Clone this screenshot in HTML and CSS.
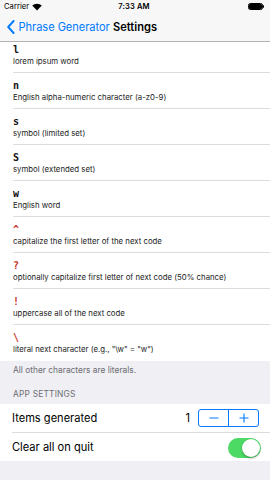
FILE: index.html
```html
<!DOCTYPE html>
<html>
<head>
<meta charset="utf-8">
<link rel="stylesheet" href="styles.css">
</head>
<body>
<div class="screen">
  <header class="topbar">
    <div class="status">
      <div class="carrier">Carrier
        <svg class="wifi" width="10" height="8" viewBox="0 0 10 8"><path d="M5 7.6 L0.2 2.6 A7 7 0 0 1 9.8 2.6 Z" fill="#000"/></svg>
      </div>
      <div class="time">7:33 AM</div>
      <div class="battery"><span class="cell"></span><span class="nub"></span></div>
    </div>
    <nav class="nav">
      <div class="back">
        <svg class="chev" width="8" height="14" viewBox="0 0 8 14"><path d="M6.6 1 L1.2 7 L6.6 13" fill="none" stroke="#007aff" stroke-width="1.9" stroke-linecap="round" stroke-linejoin="round"/></svg>
        <span>Phrase Generator</span>
      </div>
      <div class="title">Settings</div>
      <div></div>
    </nav>
  </header>
  <main class="content">
    <ul class="codes">
      <li class="code"><div class="key">l</div><div class="desc">lorem ipsum word</div></li>
      <li class="code"><div class="key">n</div><div class="desc">English alpha-numeric character (a-z0-9)</div></li>
      <li class="code"><div class="key">s</div><div class="desc">symbol (limited set)</div></li>
      <li class="code"><div class="key">S</div><div class="desc">symbol (extended set)</div></li>
      <li class="code"><div class="key">w</div><div class="desc">English word</div></li>
      <li class="code"><div class="key red">^</div><div class="desc">capitalize the first letter of the next code</div></li>
      <li class="code"><div class="key red">?</div><div class="desc">optionally capitalize first letter of next code (50% chance)</div></li>
      <li class="code"><div class="key red">!</div><div class="desc">uppercase all of the next code</div></li>
      <li class="code"><div class="key red">\</div><div class="desc">literal next character (e.g., "\w" = "w")</div></li>
    </ul>
    <div class="footer">All other characters are literals.</div>
    <div class="section-header">APP SETTINGS</div>
    <ul class="settings">
      <li class="setting">
        <span class="label">Items generated</span>
        <div class="stepper-wrap">
          <span class="value">1</span>
          <div class="stepper">
            <span class="btn"><svg width="10" height="10" viewBox="0 0 10 10"><path d="M0.5 5 H9.5" stroke="#007aff" stroke-width="1"/></svg></span>
            <span class="btn"><svg width="10" height="10" viewBox="0 0 10 10"><path d="M0.5 5 H9.5 M5 0.5 V9.5" stroke="#007aff" stroke-width="1.1"/></svg></span>
          </div>
        </div>
      </li>
      <li class="setting">
        <span class="label">Clear all on quit</span>
        <div class="switch"><span class="knob"></span></div>
      </li>
    </ul>
  </main>
</div>
</body>
</html>
```
FILE: styles.css
```css
* { box-sizing: border-box; }
html, body { margin: 0; padding: 0; }
body {
  width: 270px;
  height: 480px;
  overflow: hidden;
  background: #efeff4;
  font-family: Inter, "Noto Sans", sans-serif;
  color: #000;
}
.screen { position: relative; width: 270px; height: 480px; overflow: hidden; }

.topbar {
  position: absolute;
  top: 0; left: 0; right: 0;
  height: 41.5px;
  background: rgba(247,247,247,0.97);
  border-bottom: 0.6px solid #b2b2b2;
  z-index: 2;
}
.status {
  height: 13px;
  display: grid;
  grid-template-columns: 1fr auto 1fr;
  align-items: center;
  padding: 0 6px 0 4px;
  font-size: 7.6px;
}
.carrier { display: flex; align-items: center; gap: 3px; letter-spacing: 0.05px; }
.wifi { margin-top: 0px; }
.time { font-weight: 600; letter-spacing: 0.1px; }
.battery { justify-self: end; display: flex; align-items: center; }
.cell { width: 12.5px; height: 5.5px; background: #000; border-radius: 1.3px; outline: 0.6px solid #000; outline-offset: 0.6px; }
.nub { width: 1px; height: 2.4px; background: #000; margin-left: 1.3px; border-radius: 0 1px 1px 0; }

.nav {
  height: 28.5px;
  display: grid;
  grid-template-columns: 1fr auto 1fr;
  align-items: center;
  font-size: 11.1px;
}
.back { display: flex; align-items: center; color: #007aff; padding-left: 7px; gap: 3.5px; letter-spacing: -0.05px; }
.chev { flex: none; }
.title { font-weight: 600; letter-spacing: 0; }

.content { margin-top: 36.5px; }
.codes { list-style: none; margin: 0; padding: 0 0 0 13px; background: #fff; }
.code {
  height: 36px;
  padding-top: 6px;
  border-bottom: 0.6px solid #dcdce0;
}
.code:last-child { border-bottom: none; }
.key {
  font-family: "DejaVu Sans Mono", monospace;
  font-weight: bold;
  font-size: 10px;
  line-height: 13px;
  color: #111;
}
.key.red { color: #c9342a; }
.desc {
  font-size: 7.8px;
  line-height: 11px;
  color: #1c1c1c;
}

.footer {
  padding: 4.5px 13px 0 13px;
  height: 22px;
  font-size: 8.4px;
  line-height: 11px;
  color: #6d6d72;
}
.section-header {
  padding: 6px 13px 0 13px;
  height: 21.5px;
  font-size: 8.4px;
  line-height: 11px;
  color: #6d6d72;
  letter-spacing: 0.2px;
}
.settings { list-style: none; margin: 0; padding: 0 0 0 12px; background: #fff; }
.setting {
  height: 28.7px;
  display: flex;
  align-items: center;
  justify-content: space-between;
  padding-right: 9px;
  border-bottom: 0.6px solid #dcdce0;
  font-size: 11.1px;
}
.setting:last-child { border-bottom: none; }
.stepper-wrap { display: flex; align-items: center; gap: 8px; margin-right: 2px; }
.value { font-size: 11.1px; }
.stepper {
  display: flex;
  width: 61px;
  height: 18.5px;
  border: 1px solid #007aff;
  border-radius: 3px;
}
.btn { flex: 1; display: flex; align-items: center; justify-content: center; }
.btn + .btn { border-left: 1px solid #007aff; }
.switch {
  width: 33px;
  height: 20px;
  border-radius: 10px;
  background: #4cd964;
  display: flex;
  align-items: center;
  justify-content: flex-end;
  padding-right: 1px;
  margin-top: 2px;
}
.knob {
  width: 18px;
  height: 18px;
  border-radius: 50%;
  background: #fff;
  box-shadow: 0 1.5px 2px rgba(0,0,0,0.25), 0 0 0 0.5px rgba(0,0,0,0.05);
}
```
